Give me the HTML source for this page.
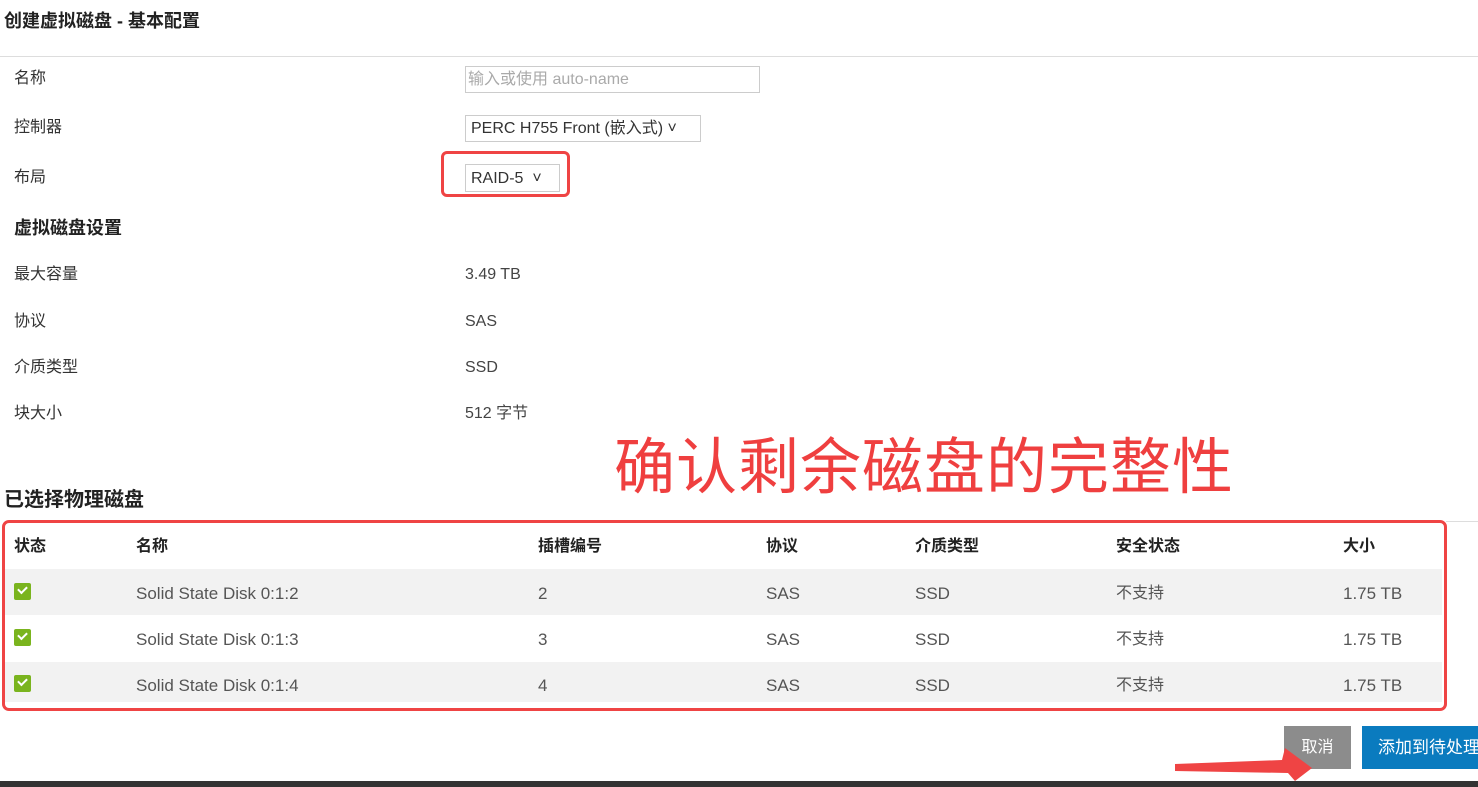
<!DOCTYPE html>
<html><head><meta charset="utf-8"><style>
*{margin:0;padding:0;box-sizing:border-box}
body{width:1478px;height:787px;overflow:hidden;background:#fff;position:relative;font-family:"Liberation Sans","Noto Sans CJK SC",sans-serif;color:#333;font-size:16px;line-height:20px}
.a{position:absolute;white-space:nowrap}
.lbl{left:14px;font-size:16px;color:#333}
.val{left:465px;font-size:16px;color:#444}
.h{font-weight:bold;color:#222}
.row{position:absolute;left:4px;width:1438px;height:46px}
.cb{position:absolute;left:14px;width:17px;height:17px;background:#7ab41e;border-radius:2px}
.cb:after{content:"";position:absolute;left:4px;top:3px;width:7px;height:4px;border-left:2px solid #fff;border-bottom:2px solid #fff;transform:rotate(-45deg)}
.td{position:absolute;font-size:17px;color:#555;line-height:20px;white-space:nowrap}
</style></head><body>
<div class="a h" style="left:4px;top:11px;font-size:18px">创建虚拟磁盘 - 基本配置</div>
<div class="a" style="left:0;top:56px;width:1478px;height:1px;background:#ddd"></div>

<div class="a lbl" style="top:69px">名称</div>
<div class="a" style="left:465px;top:66px;width:295px;height:27px;border:1px solid #ccc;color:#aaa;padding:3px 0 0 2px;font-size:16px">输入或使用 auto-name</div>

<div class="a lbl" style="top:118px">控制器</div>
<div class="a" style="left:465px;top:115px;width:236px;height:27px;border:1px solid #ccc;color:#333;padding:3px 0 0 5px;font-size:16px">PERC H755 Front (嵌入式) ˅</div>

<div class="a lbl" style="top:168px">布局</div>
<div class="a" style="left:441px;top:151px;width:129px;height:46px;border:3px solid #ef4444;border-radius:6px"></div>
<div class="a" style="left:465px;top:164px;width:95px;height:28px;border:1px solid #ccc;color:#333;padding:4px 0 0 5px;font-size:16px">RAID-5 &nbsp;˅</div>

<div class="a h" style="left:14px;top:218px;font-size:18px">虚拟磁盘设置</div>
<div class="a lbl" style="top:265px">最大容量</div><div class="a val" style="top:265px">3.49 TB</div>
<div class="a lbl" style="top:312px">协议</div><div class="a val" style="top:312px">SAS</div>
<div class="a lbl" style="top:358px">介质类型</div><div class="a val" style="top:358px">SSD</div>
<div class="a lbl" style="top:404px">块大小</div><div class="a val" style="top:404px">512 字节</div>

<div class="a" style="left:614px;top:435px;font-size:61px;line-height:64px;color:#ef3f3f;letter-spacing:1px">确认剩余磁盘的完整性</div>

<div class="a h" style="left:4px;top:488px;font-size:20px;line-height:24px">已选择物理磁盘</div>
<div class="a" style="left:1446px;top:521px;width:32px;height:1px;background:#ddd"></div>

<div class="row" style="top:524px;background:#fff"></div>
<div class="row" style="top:569px;background:#f2f2f2"></div>
<div class="row" style="top:616px;background:#fff"></div>
<div class="row" style="top:662px;background:#f2f2f2;height:40px"></div>

<div class="a h" style="left:14px;top:537px;font-size:16px">状态</div>
<div class="a h" style="left:136px;top:537px;font-size:16px">名称</div>
<div class="a h" style="left:538px;top:537px;font-size:16px">插槽编号</div>
<div class="a h" style="left:766px;top:537px;font-size:16px">协议</div>
<div class="a h" style="left:915px;top:537px;font-size:16px">介质类型</div>
<div class="a h" style="left:1116px;top:537px;font-size:16px">安全状态</div>
<div class="a h" style="left:1343px;top:537px;font-size:16px">大小</div>

<div class="cb" style="top:583px"></div>
<div class="td" style="left:136px;top:584px">Solid State Disk 0:1:2</div><div class="td" style="left:538px;top:584px">2</div><div class="td" style="left:766px;top:584px">SAS</div><div class="td" style="left:915px;top:584px">SSD</div><div class="td" style="left:1116px;top:584px;font-size:16px">不支持</div><div class="td" style="left:1343px;top:584px">1.75 TB</div>
<div class="cb" style="top:629px"></div>
<div class="td" style="left:136px;top:630px">Solid State Disk 0:1:3</div><div class="td" style="left:538px;top:630px">3</div><div class="td" style="left:766px;top:630px">SAS</div><div class="td" style="left:915px;top:630px">SSD</div><div class="td" style="left:1116px;top:630px;font-size:16px">不支持</div><div class="td" style="left:1343px;top:630px">1.75 TB</div>
<div class="cb" style="top:675px"></div>
<div class="td" style="left:136px;top:676px">Solid State Disk 0:1:4</div><div class="td" style="left:538px;top:676px">4</div><div class="td" style="left:766px;top:676px">SAS</div><div class="td" style="left:915px;top:676px">SSD</div><div class="td" style="left:1116px;top:676px;font-size:16px">不支持</div><div class="td" style="left:1343px;top:676px">1.75 TB</div>

<div class="a" style="left:2px;top:520px;width:1445px;height:191px;border:3px solid #ef4444;border-radius:7px"></div>

<div class="a" style="left:1284px;top:726px;width:67px;height:43px;background:#8c8c8c;color:#fff;font-size:16px;text-align:center;line-height:43px">取消</div>
<div class="a" style="left:1362px;top:726px;width:120px;height:43px;background:#0a7bbf;color:#fff;font-size:17px;padding-left:16px;line-height:43px">添加到待处理</div>

<div class="a" style="left:0;top:781px;width:1478px;height:6px;background:#333"></div>
<svg class="a" style="left:1170px;top:740px" width="150" height="47"><polygon points="5,24 112,20 115,8 142,28 125,41 118,33 5,31" fill="#ef4444"/></svg>
</body></html>
